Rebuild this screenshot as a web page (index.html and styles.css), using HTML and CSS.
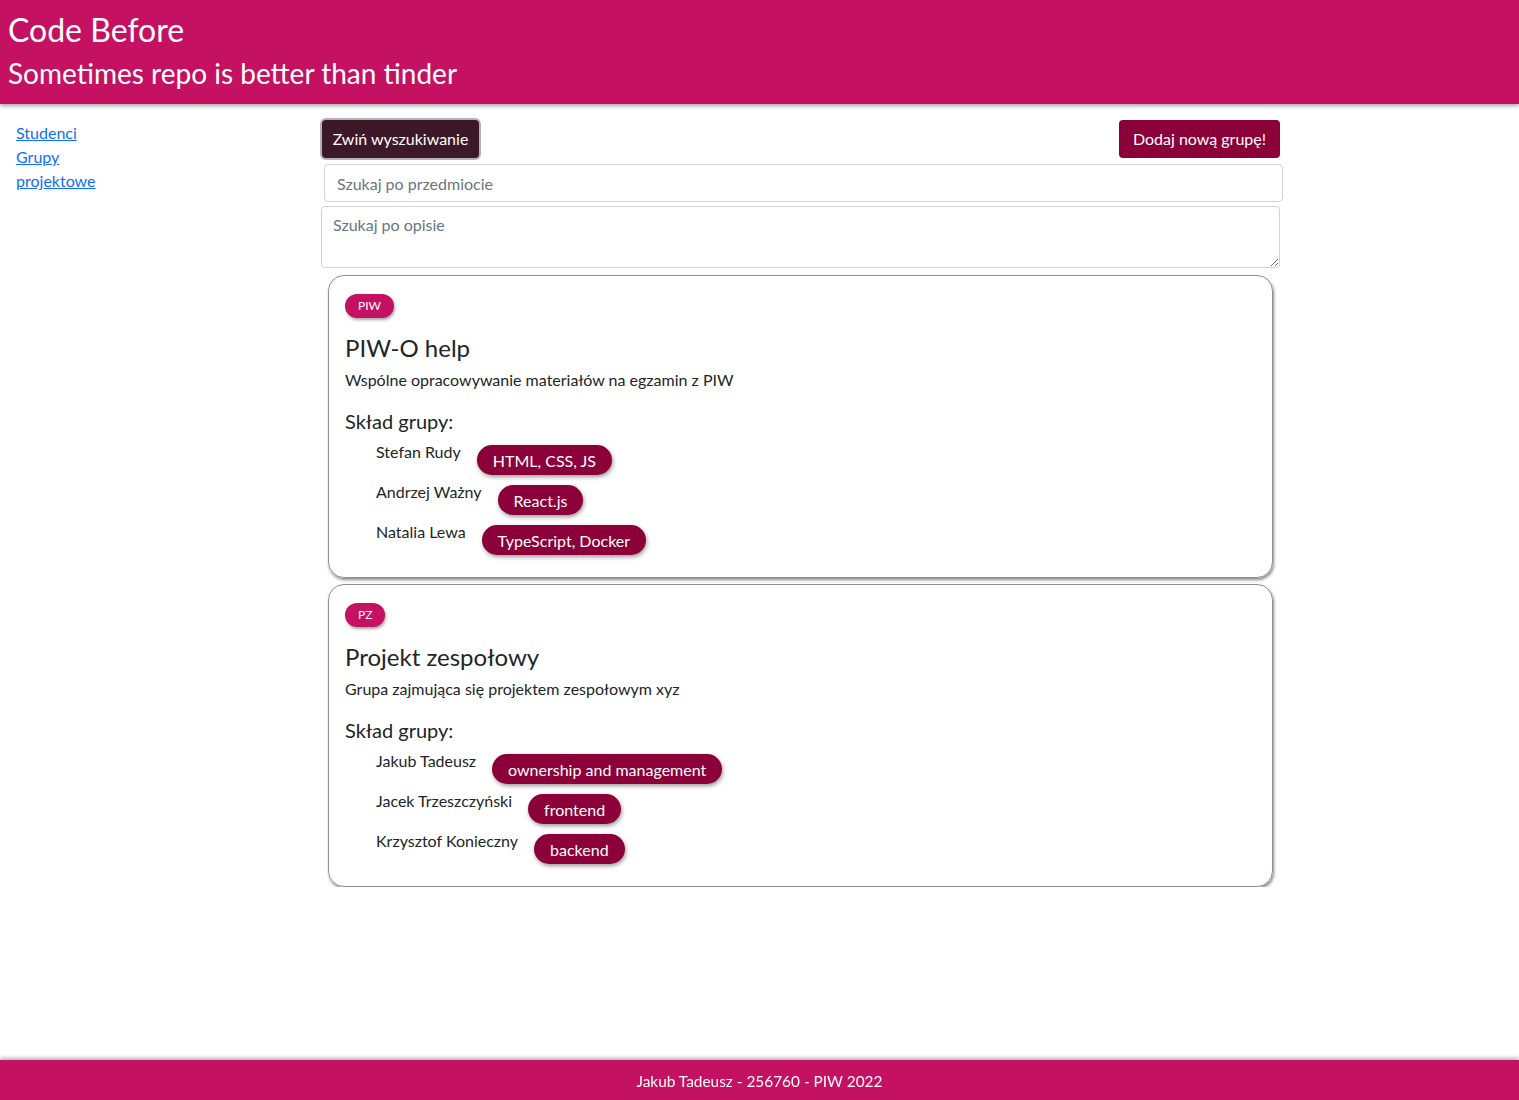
FILE: index.html
```html
<!DOCTYPE html>
<html lang="pl">
<head>
<meta charset="utf-8">
<title>Code Before</title>
<link rel="stylesheet" href="styles.css">
</head>
<body>
<header class="top">
  <h1 class="brand">Code Before</h1>
  <h2 class="tagline">Sometimes repo is better than tinder</h2>
</header>
<div class="layout">
  <nav class="side">
    <a href="#">Studenci</a>
    <a href="#">Grupy projektowe</a>
  </nav>
  <main class="main">
    <div class="actions">
      <button class="btn btn-dark">Zwiń wyszukiwanie</button>
      <button class="btn btn-add">Dodaj nową grupę!</button>
    </div>
    <input class="field" type="text" placeholder="Szukaj po przedmiocie">
    <textarea class="area" placeholder="Szukaj po opisie"></textarea>

    <section class="card">
      <span class="tag">PIW</span>
      <h3 class="card-title">PIW-O help</h3>
      <p class="desc">Wspólne opracowywanie materiałów na egzamin z PIW</p>
      <h4 class="sub">Skład grupy:</h4>
      <ul class="members">
        <li class="member"><span class="name">Stefan Rudy</span><span class="skill">HTML, CSS, JS</span></li>
        <li class="member"><span class="name">Andrzej Ważny</span><span class="skill">React.js</span></li>
        <li class="member"><span class="name">Natalia Lewa</span><span class="skill">TypeScript, Docker</span></li>
      </ul>
    </section>

    <section class="card">
      <span class="tag">PZ</span>
      <h3 class="card-title">Projekt zespołowy</h3>
      <p class="desc">Grupa zajmująca się projektem zespołowym xyz</p>
      <h4 class="sub">Skład grupy:</h4>
      <ul class="members">
        <li class="member"><span class="name">Jakub Tadeusz</span><span class="skill">ownership and management</span></li>
        <li class="member"><span class="name">Jacek Trzeszczyński</span><span class="skill">frontend</span></li>
        <li class="member"><span class="name">Krzysztof Konieczny</span><span class="skill">backend</span></li>
      </ul>
    </section>
  </main>
</div>
<footer class="foot">Jakub Tadeusz - 256760 - PIW 2022</footer>
</body>
</html>
```

FILE: styles.css
```css
* { box-sizing: border-box; }
body {
  margin: 0;
  font-family: "Lato", "Open Sans", "Liberation Sans", sans-serif;
  font-size: 16px;
  line-height: 24px;
  color: #212529;
  background: #fff;
}
.top {
  background: #c51162;
  color: #fff;
  padding: 11px 8px 14px;
  box-shadow: 0 2px 4px rgba(0,0,0,0.35);
  height: 104px;
}
.brand {
  margin: 0;
  font-size: 32px;
  line-height: 38px;
  font-weight: 400;
}
.tagline {
  margin: 7px 0 0;
  font-size: 28px;
  line-height: 34px;
  font-weight: 400;
}
.layout {
  display: flex;
}
.side {
  width: 320px;
  flex: none;
  padding: 17px 16px 0;
}
.side a {
  display: block;
  width: 90px;
  color: #0d6efd;
  text-decoration: underline;
}
.main {
  width: 963px;
  flex: none;
}
.actions {
  display: flex;
  justify-content: space-between;
  margin-top: 16px;
  padding: 0 3px 0 2px;
}
.btn {
  font: inherit;
  font-size: 16px;
  line-height: 24px;
  color: #fff;
  border: none;
  border-radius: 4px;
  height: 38px;
  padding: 0;
  white-space: nowrap;
  text-align: center;
}
.btn-dark {
  background: #3d1829;
  box-shadow: 0 0 0 2px #b3b3b3;
  width: 157px;
}
.btn-add {
  background: #8b0038;
  width: 161px;
}
.field {
  display: block;
  margin: 6px 0 0 4px;
  width: 959px;
  height: 38px;
  border: 1px solid #ced4da;
  border-radius: 4px;
  padding: 6px 12px;
  font: inherit;
  color: #212529;
}
.area {
  display: block;
  margin: 4px 0 0 1px;
  width: 959px;
  height: 62px;
  border: 1px solid #ced4da;
  border-radius: 4px;
  padding: 6px 11px;
  font: inherit;
  color: #212529;
  resize: vertical;
}
.field::placeholder, .area::placeholder { color: #6c757d; }
.card {
  margin: 7px 0 0 8px;
  width: 945px;
  height: 303px;
  border: 1px solid #8f8f8f;
  border-radius: 16px;
  box-shadow: 1px 2px 3px rgba(0,0,0,0.45);
  padding: 18px 16px 0;
}
.card + .card { margin-top: 6px; }
.tag {
  display: inline-block;
  background: #c51162;
  color: #fff;
  font-size: 12px;
  line-height: 24px;
  height: 24px;
  padding: 0 13px;
  border-radius: 12px;
  box-shadow: 1px 2px 3px rgba(0,0,0,0.35);
  vertical-align: top;
}
.card-title {
  margin: 15px 0 0;
  font-size: 24px;
  line-height: 29px;
  font-weight: 400;
}
.desc {
  margin: 6px 0 0;
}
.sub {
  margin: 17px 0 0;
  font-size: 20px;
  line-height: 24px;
  font-weight: 400;
}
.members {
  list-style: none;
  margin: 7px 0 0;
  padding: 0 0 0 31px;
  display: flex;
  flex-direction: column;
  gap: 5px;
}
.member {
  display: flex;
  align-items: flex-start;
  gap: 16px;
}
.skill {
  margin-top: 5px;
  background: #8b0038;
  color: #fff;
  height: 30px;
  line-height: 31px;
  padding: 0 16px;
  border-radius: 15px;
  box-shadow: 1px 2px 4px rgba(0,0,0,0.4);
}
.foot {
  position: fixed;
  left: 0;
  right: 0;
  bottom: 0;
  height: 40px;
  background: #c51162;
  color: #fff;
  text-align: center;
  font-size: 15.4px;
  line-height: 42px;
  box-shadow: 0 -2px 4px rgba(0,0,0,0.3);
}
```
